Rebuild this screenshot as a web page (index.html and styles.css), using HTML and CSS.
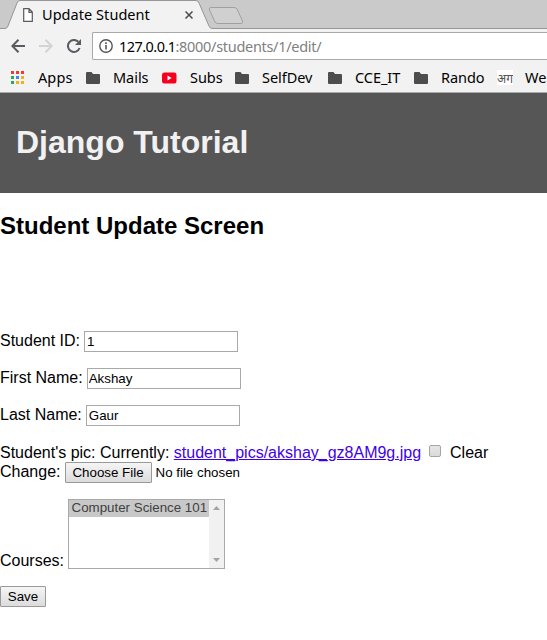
FILE: index.html
```html
<!DOCTYPE html>
<html lang="en">
<head>
<meta charset="utf-8">
<title>Update Student</title>
<link rel="stylesheet" href="styles.css">
</head>
<body>
<div class="browser">
  <div class="tabstrip">
    <svg class="tabshape" width="547" height="29" viewBox="0 0 547 29">
      <path d="M0 28.5H5Q7 28.5 8 26L17 3Q18 .5 20 .5H196Q198 .5 199 3L209 26Q210 28.5 212 28.5H547V30H0Z" fill="#f2f2f2"/>
      <path d="M0 28.5H5Q7 28.5 8 26L17 3Q18 .5 20 .5H196Q198 .5 199 3L209 26Q210 28.5 212 28.5H547" fill="none" stroke="#969696"/>
      <path d="M211 7.5H234Q236 7.5 237 9L242.500 21Q243 23.500 241 23.500H218Q216 23.500 215 22L209.500 10Q208.500 7.500 211 7.500Z" fill="#d0d0d0" stroke="#a0a0a0"/>
    </svg>
    <svg class="page-icon" width="10" height="14" viewBox="0 0 10 14"><path d="M.7.7H6L9.300 4V13.300H.700ZM6 .700V4.300H9.300" fill="#fff" stroke="#5a5a5a" stroke-width="1.200"/></svg>
    <span class="tab-title">Update Student</span>
    <svg class="close" width="8" height="8" viewBox="0 0 8 8"><path d="M.5.5L7.500 7.500M7.500.5L.5 7.500" stroke="#4a4a4a" stroke-width="1.500"/></svg>
  </div>
  <div class="toolbar">
    <svg class="nav" width="14" height="14" viewBox="0 0 14 14"><path d="M14 7H1.500M7.500 .8L1.300 7L7.500 13.200" fill="none" stroke="#5a5b60" stroke-width="2"/></svg>
    <svg class="nav" width="14" height="14" viewBox="0 0 14 14"><path d="M0 7H12.500M6.500 .8L12.700 7L6.500 13.200" fill="none" stroke="#d2d3d5" stroke-width="2"/></svg>
    <svg class="nav" width="14" height="14" viewBox="0 0 14 14"><path d="M12.600 9A6 6 0 1 1 11.300 2.800" fill="none" stroke="#5a5b60" stroke-width="2"/><path d="M14 0V6H8Z" fill="#5a5b60"/></svg>
    <div class="address">
      <svg width="14" height="14" viewBox="0 0 14 14"><circle cx="7" cy="7" r="6.200" fill="none" stroke="#555" stroke-width="1.400"/><path d="M6.200 6H7.800V10.500H6.200ZM6.200 3.300H7.800V4.900H6.200Z" fill="#555"/></svg>
      <span class="host">127.0.0.1</span><span class="path">:8000/students/1/edit/</span>
    </div>
  </div>
  <div class="bookmarks">
    <svg class="bm-icon" width="14" height="14" viewBox="0 0 14 14">
      <path d="M0 0h3v3H0zM5 0h3v3H5zM10 0h3v3h-3z" fill="#ea3c36"/>
      <path d="M0 5h3v3H0zM0 10h3v3H0z" fill="#33a457"/>
      <path d="M5 5h3v3H5z" fill="#4285f4"/><path d="M5 10h3v3H5zM10 5h3v3h-3zM10 10h3v3h-3z" fill="#f2b11c"/>
    </svg>
    <span class="bm w-apps">Apps</span>
    <svg class="bm-icon" width="14" height="14" viewBox="0 0 14 14"><path id="folder" d="M1 1H5.500L7 3H13Q14 3 14 4V12Q14 13 13 13H1Q0 13 0 12V2Q0 1 1 1Z" fill="#4d4d4d"/></svg>
    <span class="bm w-mails">Mails</span>
    <svg class="bm-icon" width="15" height="14" viewBox="0 0 15 14"><rect y="1.500" width="14.500" height="11" rx="2.500" fill="#f6001e"/><path d="M5.500 4.500L9.700 7L5.500 9.500Z" fill="#fff"/></svg>
    <span class="bm w-subs">Subs</span>
    <svg class="bm-icon" width="14" height="14" viewBox="0 0 14 14"><use href="#folder"/></svg>
    <span class="bm w-self">SelfDev</span>
    <svg class="bm-icon" width="14" height="14" viewBox="0 0 14 14"><use href="#folder"/></svg>
    <span class="bm w-cce">CCE_IT</span>
    <svg class="bm-icon" width="14" height="14" viewBox="0 0 14 14"><use href="#folder"/></svg>
    <span class="bm w-rando">Rando</span>
    <span class="bm-hindi">अग</span>
    <span class="bm we">We</span>
  </div>
</div>
<header class="banner"><h1>Django Tutorial</h1></header>
<main>
  <h2>Student Update Screen</h2>
  <form>
    <div class="row"><label>Student ID:</label><input class="field" type="text" value="1"></div>
    <div class="row"><label>First Name:</label><input class="field" type="text" value="Akshay"></div>
    <div class="row"><label>Last Name:</label><input class="field" type="text" value="Gaur"></div>
    <div class="picture">
      <div class="current">Student's pic: Currently: <a href="#">student_pics/akshay_gz8AM9g.jpg</a><span class="check"></span><span>Clear</span></div>
      <div class="change"><span>Change:</span><button type="button" class="btn choose">Choose File</button><span class="nofile">No file chosen</span></div>
    </div>
    <div class="courses">
      <label>Courses:</label>
      <div class="listbox">
        <div class="options"><div class="option">Computer Science 101</div></div>
        <div class="scroll">
          <svg width="7" height="4" viewBox="0 0 7 4"><path d="M0 4L3.500 0L7 4Z" fill="#a3a3a3"/></svg>
          <svg width="7" height="4" viewBox="0 0 7 4"><path d="M0 0L3.500 4L7 0Z" fill="#a3a3a3"/></svg>
        </div>
      </div>
    </div>
    <button type="button" class="btn save">Save</button>
  </form>
</main>
</body>
</html>
```
FILE: styles.css
```css
* { box-sizing: border-box; }
body { margin: 0; background: #fff; color: #000; font: 16px/18px "Liberation Sans", Arial, sans-serif; overflow: hidden; height: 640px; }
.browser { width: 547px; height: 93px; background: #f2f2f2; border-bottom: 1px solid #a9a9a9; font-family: "Noto Sans", sans-serif; font-size: 14.5px; white-space: nowrap; overflow: hidden; }
.tabstrip { position: relative; height: 29px; background: #cacaca; display: flex; align-items: center; padding-left: 23px; }
.tabshape { position: absolute; left: 0; top: 0; }
.page-icon, .tab-title, .close { position: relative; flex: none; }
.tab-title { width: 141px; margin-left: 9px; padding-bottom: 2px; letter-spacing: 0.05px; }
.close { margin-left: 2px; }
.toolbar { height: 34px; display: flex; align-items: center; padding-left: 11px; gap: 14px; }
.nav { flex: none; }
.address { flex: 1; height: 28px; margin-left: -3px; border: 1px solid #a8a8a8; border-right: 0; border-radius: 2px 0 0 2px; background: #fff; display: flex; align-items: center; padding: 0 0 0 6px; }
.host { margin-left: 6px; padding-bottom: 1px; letter-spacing: -0.55px; }
.path { padding-bottom: 1px; color: #808080; letter-spacing: -0.3px; }
.bookmarks { height: 29px; display: flex; align-items: center; padding-left: 11px; }
.bm-icon { flex: none; }
.bm { flex: none; margin-left: 13px; padding-bottom: 2px; letter-spacing: -0.05px; }
.w-apps { width: 48px; letter-spacing: 0.1px; }
.w-mails { width: 49px; }
.w-subs { width: 45px; }
.w-self { width: 66px; }
.w-cce { width: 59px; }
.w-rando { width: 56px; }
.we { margin-left: 12px; }
.bm-hindi { flex: none; width: 16px; height: 15px; background: #fff; color: #555; font-size: 12px; line-height: 17px; overflow: hidden; }
.banner { height: 100px; background: #565656; padding: 31px 16px; }
.banner h1 { margin: 0; font-size: 32px; line-height: 36px; color: #f1f1f1; }
h2 { margin: 20px 0 91px; font-size: 24px; line-height: 26px; height: 27px; }
.row { height: 21px; margin-bottom: 16px; display: flex; gap: 4px; }
.row label { line-height: 19px; }
.field { width: 154px; height: 21px; margin: 0; padding: 1px 2px; border: 1px solid #a9a9a9; border-radius: 0; font: 13.333px "Liberation Sans", Arial, sans-serif; color: #000; background: #fff; }
.row:nth-child(2) .field { padding-left: 1px; }
.picture { margin: 17px 0 16px; }
.row:nth-child(3) { margin-bottom: 0; }
.current { height: 19px; line-height: 19px; display: flex; white-space: pre; }
.current a { color: #3f00ea; text-decoration: underline; }
.check { width: 12px; height: 12px; margin: 2px 9px 0 8px; border: 1px solid #a5a5a5; border-radius: 2px; background: linear-gradient(#e6e6e6, #dadada); }
.change { height: 21px; display: flex; align-items: center; }
.change > span:first-child { position: relative; top: -1px; }
.btn { height: 21px; margin: 0; padding: 0; border: 1px solid #999; border-radius: 1px; background: linear-gradient(#f5f5f5, #dcdcdc); font: 13.333px "Liberation Sans", Arial, sans-serif; color: #000; }
.choose { width: 87px; margin: 0 4px; }
.nofile { font-size: 13.333px; }
.courses { height: 70px; margin-bottom: 17px; display: flex; align-items: flex-end; gap: 4px; }
.courses label { line-height: 16px; }
.listbox { width: 157px; height: 70px; border: 1px solid #a9a9a9; display: flex; }
.options { flex: 1; min-width: 0; }
.option { height: 17px; line-height: 15px; padding-left: 2.5px; background: #c8c8c8; color: #414141; font-size: 13.333px; white-space: nowrap; }
.scroll { flex: none; width: 15px; background: #f1f1f1; display: flex; flex-direction: column; justify-content: space-between; align-items: center; padding: 6px 0; }
.save { width: 46px; display: block; }
```
